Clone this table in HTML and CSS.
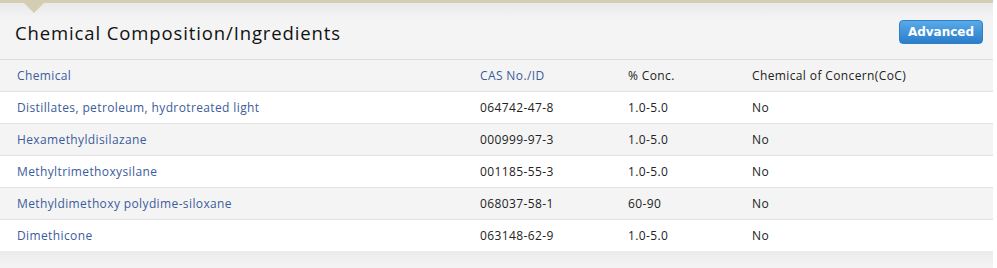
FILE: index.html
```html
<!DOCTYPE html>
<html>
<head>
<meta charset="utf-8">
<link rel="stylesheet" href="styles.css">
</head>
<body>
<div class="panel">
  <div class="pointer"></div>
  <div class="panel-head">
    <h2 class="title">Chemical Composition/Ingredients</h2>
    <button class="btn">Advanced</button>
  </div>
  <div class="table">
    <div class="row head">
      <div class="c1 link">Chemical</div>
      <div class="c2 link">CAS No./ID</div>
      <div class="c3">% Conc.</div>
      <div class="c4">Chemical of Concern(CoC)</div>
    </div>
    <div class="row white">
      <div class="c1 link">Distillates, petroleum, hydrotreated light</div>
      <div class="c2">064742-47-8</div>
      <div class="c3">1.0-5.0</div>
      <div class="c4">No</div>
    </div>
    <div class="row grey">
      <div class="c1 link">Hexamethyldisilazane</div>
      <div class="c2">000999-97-3</div>
      <div class="c3">1.0-5.0</div>
      <div class="c4">No</div>
    </div>
    <div class="row white">
      <div class="c1 link">Methyltrimethoxysilane</div>
      <div class="c2">001185-55-3</div>
      <div class="c3">1.0-5.0</div>
      <div class="c4">No</div>
    </div>
    <div class="row grey">
      <div class="c1 link">Methyldimethoxy polydime-siloxane</div>
      <div class="c2">068037-58-1</div>
      <div class="c3">60-90</div>
      <div class="c4">No</div>
    </div>
    <div class="row white last">
      <div class="c1 link">Dimethicone</div>
      <div class="c2">063148-62-9</div>
      <div class="c3">1.0-5.0</div>
      <div class="c4">No</div>
    </div>
  </div>
  <div class="foot"></div>
</div>
</body>
</html>
```
FILE: styles.css
```css
html, body {
  margin: 0;
  padding: 0;
  background: #ffffff;
}
body {
  font-family: "Open Sans", "DejaVu Sans", sans-serif;
}
.panel {
  position: relative;
  width: 993px;
  border-top: 3px solid #d4cdb2;
  background: #f4f4f4;
}
.pointer {
  position: absolute;
  left: 24px;
  top: 0;
  width: 0;
  height: 0;
  border-left: 10px solid transparent;
  border-right: 10px solid transparent;
  border-top: 10px solid #d4cdb2;
}
.panel-head {
  height: 56px;
  display: flex;
  align-items: center;
  justify-content: space-between;
  padding: 0 10px 0 15px;
  background: linear-gradient(#e9e9e9 0px, #f4f4f4 16px, #f4f4f4);
  border-bottom: 1px solid #dedede;
}
.title {
  margin: 0;
  font-size: 18.5px;
  font-weight: 400;
  color: #111111;
  letter-spacing: 0.88px;
  padding-top: 2px;
}
.btn {
  width: 84px;
  height: 24px;
  margin-top: 1px;
  border: 1px solid #2d7fc6;
  border-radius: 4px;
  background: linear-gradient(#58aaea, #2b7dc9);
  color: #ffffff;
  font-family: "DejaVu Sans", sans-serif;
  font-weight: 700;
  font-size: 12px;
  padding: 0;
}
.row {
  display: flex;
  align-items: center;
  height: 31px;
  border-bottom: 1px solid #e2e2e2;
  font-size: 12px;
  letter-spacing: 0.38px;
  color: #222222;
}
.row.head {
  background: #f4f4f4;
}
.row.white {
  background: #ffffff;
}
.row.grey {
  background: #f4f4f4;
}
.row.last {
  border-bottom: none;
}
.c1 {
  width: 463px;
  padding-left: 17px;
}
.c2 {
  width: 148px;
}
.c3 {
  width: 124px;
}
.c4 {
  flex: 1;
}
.link {
  color: #3b5c9c;
}
.foot {
  height: 17px;
  background: linear-gradient(#ececec, #f4f4f4);
}
```
